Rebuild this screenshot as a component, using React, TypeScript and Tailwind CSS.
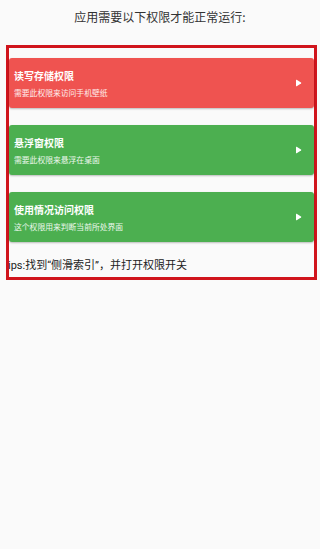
import React from 'react';

const PERMS = [
  { id: 'storage', title: '读写存储权限', desc: '需要此权限来访问手机壁纸', bg: 'bg-[#ef5350]' },
  { id: 'overlay', title: '悬浮窗权限', desc: '需要此权限来悬浮在桌面', bg: 'bg-[#4caf50]' },
  { id: 'usage', title: '使用情况访问权限', desc: '这个权限用来判断当前所处界面', bg: 'bg-[#4caf50]' },
];

const Play = () => (
  <svg width="7" height="8" viewBox="0 0 7 8" className="shrink-0">
    <path d="M1 1.2 Q1 0.4 1.7 0.8 L6 3.4 Q6.6 4 6 4.6 L1.7 7.2 Q1 7.6 1 6.8 Z" fill="#fff" />
  </svg>
);

export default function App() {
  return (
    <div
      className="w-[320px] h-[549px] bg-[#fafafa] overflow-hidden"
      style={{ fontFamily: '"Noto Sans CJK SC", "Noto Sans", sans-serif' }}
    >
      {/* Header */}
      <div className="h-[45px] flex items-start justify-center pt-[8px]">
        <h1 className="text-[12px] text-[#333] leading-[18px]">应用需要以下权限才能正常运行:</h1>
      </div>

      {/* Highlighted permission list */}
      <div className="mx-[6px] w-[311px] h-[235px] border-[3px] border-[#d0141c] flex flex-col">
        <div className="flex flex-col gap-[17px] pt-[10px]">
          {PERMS.map(p => (
            <div
              key={p.id}
              className={`${p.bg} h-[50px] rounded-[3px] shadow-[0_1px_2px_rgba(0,0,0,0.25)] flex items-center pl-[5px] pr-[12px]`}
            >
              <div className="flex-1 flex flex-col gap-[6px] pt-[1px]">
                <span className="text-[10px] font-bold text-white leading-[12px]">{p.title}</span>
                <span className="text-[7.8px] text-white/90 leading-[10px]">{p.desc}</span>
              </div>
              <Play />
            </div>
          ))}
        </div>
        <p
          className="mt-[17px] text-[11px] text-[#222] leading-[14px] -ml-[1px]"
          style={{ fontFamily: 'Roboto, "Noto Sans CJK SC", sans-serif' }}
        >
          ips:找到“侧滑索引”，并打开权限开关
        </p>
      </div>
    </div>
  );
}
